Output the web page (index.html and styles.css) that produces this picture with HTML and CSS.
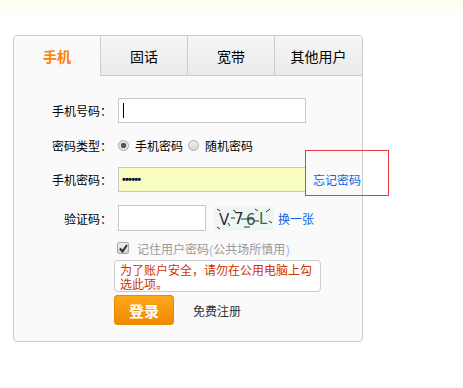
FILE: index.html
```html
<!DOCTYPE html>
<html>
<head>
  <meta charset="utf-8">
  <title>用户登录</title>
  <link rel="stylesheet" href="styles.css">
</head>
<body>
  <div class="topband"></div>

  <div class="login-box">
    <ul class="tabs">
      <li class="tab active">手机</li>
      <li class="tab">固话</li>
      <li class="tab">宽带</li>
      <li class="tab last">其他用户</li>
    </ul>

    <form class="login-form">
      <div class="row row-phone">
        <label class="lbl">手机号码：</label>
        <span class="input focus"><span class="caret"></span></span>
      </div>

      <div class="row row-type">
        <label class="lbl">密码类型：</label>
        <span class="radio checked"></span><span class="opt">手机密码</span>
        <span class="radio"></span><span class="opt">随机密码</span>
      </div>

      <div class="row row-pwd">
        <label class="lbl">手机密码：</label>
        <span class="input pwd">••••••</span>
      </div>

      <div class="row row-code">
        <label class="lbl">验证码：</label>
        <span class="input code"></span>
        <svg class="captcha" width="60" height="25" viewBox="0 0 60 25">
          <rect width="60" height="25" fill="#eef5f3"/>
          <text x="5" y="19" font-family="DejaVu Sans, sans-serif" font-size="15" fill="#3b2a4a">V</text>
          <text x="20" y="18" font-family="DejaVu Sans, sans-serif" font-size="15" fill="#2a2f3a">7</text>
          <text x="32" y="19" font-family="DejaVu Sans, sans-serif" font-size="15" fill="#2f5a4a">6</text>
          <text x="45" y="18" font-family="DejaVu Sans, sans-serif" font-size="15" fill="#2d6b55">L</text>
          <path d="M3 3l3 2M14 17l2 3M19 4l3 2M17 12h4M27 13h12M30 21h6M41 3l3 2M40 15h5M52 6l4-3M55 15l3 2M3 21l3 2" stroke="#333" stroke-width="1"/>
        </svg>
        <a class="link refresh" href="#">换一张</a>
      </div>

      <div class="row row-remember">
        <span class="check">
          <svg width="9" height="9" viewBox="0 0 9 9"><path d="M1 4.5l2.5 3L8 1" stroke="#333" stroke-width="2" fill="none"/></svg>
        </span>
        <span class="remember">记住用户密码<span class="paren">(</span>公共场所慎用<span class="paren">)</span></span>
      </div>

      <div class="warn">为了账户安全，请勿在公用电脑上勾选此项。</div>

      <div class="row row-submit">
        <button type="button" class="btn-login">登录</button>
        <a class="register" href="#">免费注册</a>
      </div>
    </form>

    <div class="forgot-tip"><a class="link" href="#">忘记密码</a></div>
  </div>
</body>
</html>
```

FILE: styles.css
```css
body { margin: 0; font-family: "Noto Sans CJK SC", "Liberation Sans", sans-serif; font-size: 12px; color: #000; background: #fff; }
.topband { height: 18px; background: linear-gradient(#fdfdf0, #fff); }

.login-box { position: relative; width: 348px; margin: 17px 0 0 13px; border: 1px solid #ccc; border-radius: 4px; background: #fafafa; }

.tabs { display: flex; margin: 0; padding: 0; list-style: none; height: 40px; }
.tab { display: flex; align-items: center; justify-content: center; width: 86px; font-size: 14px; background: linear-gradient(#f6f6f6, #ebebeb); border-left: 1px solid #ccc; border-bottom: 1px solid #ccc; }
.tab.active { width: 86px; border-left: none; border-bottom: 1px solid transparent; background: #fafafa; color: #ff8000; font-weight: bold; border-top-left-radius: 4px; }
.tab.last { flex: 1; border-top-right-radius: 4px; }

.login-form { padding: 22px 0 16px; }
.row { display: flex; align-items: center; }
.lbl { width: 98px; text-align: right; margin-right: 6px; }

.input { display: block; box-sizing: border-box; height: 25px; border: 1px solid #c8c8c8; background: #fff; }
.row-phone .input { width: 188px; }
.caret { display: block; width: 1px; height: 15px; margin: 4px 0 0 4px; background: #000; }

.row-type { margin-top: 12px; height: 20px; }
.radio { box-sizing: border-box; width: 11px; height: 11px; border: 1px solid #aaa; border-radius: 50%; background: linear-gradient(#eee, #d6d6d6); margin-right: 6px; }
.radio.checked { background: radial-gradient(circle, #555 0 2.5px, #e4e4e4 3px); }
.opt { margin-right: 5px; }

.row-pwd { margin-top: 12px; }
.row-pwd .input { width: 188px; background: #f9fdc0; font-family: "Liberation Sans", sans-serif; font-size: 11px; font-weight: bold; line-height: 22px; padding-left: 3px; letter-spacing: -0.8px; color: #101040; }

.row-code { margin-top: 13px; }
.row-code .input { width: 88px; height: 26px; }
.captcha { margin-left: 8px; }
.link { color: #0a64e6; text-decoration: none; }
.refresh { margin-left: 4px; }

.row-remember { margin: 9px 0 0 103px; height: 16px; }
.check { box-sizing: border-box; display: flex; align-items: center; justify-content: center; width: 12px; height: 12px; border: 1px solid #aaa; border-radius: 2px; background: linear-gradient(#eee, #d0d0d0); }
.remember { margin-left: 8px; color: #999; font-size: 12px; }
.paren { color: #a8c0e8; font-family: "Liberation Sans", sans-serif; font-size: 13px; }

.warn { box-sizing: border-box; width: 207px; height: 32px; margin: 4px 0 0 100px; padding: 2px 5px 0; border: 1px solid #ccc; border-radius: 4px; background: #fff; color: #cc3300; font-size: 12px; line-height: 14px; }

.row-submit { margin: 3px 0 0 100px; }
.btn-login { width: 60px; height: 30px; border: 1px solid #e88a00; border-radius: 3px; background: linear-gradient(#ffa71c, #f08800); color: #fff; font-family: inherit; font-size: 15px; font-weight: bold; cursor: pointer; }
.register { margin-left: 19px; color: #333; text-decoration: none; }

.forgot-tip { position: absolute; left: 291px; top: 114px; box-sizing: border-box; width: 84px; height: 46px; padding: 20px 0 0 7px; border: 1px solid #e83a3a; background: transparent; }
```
